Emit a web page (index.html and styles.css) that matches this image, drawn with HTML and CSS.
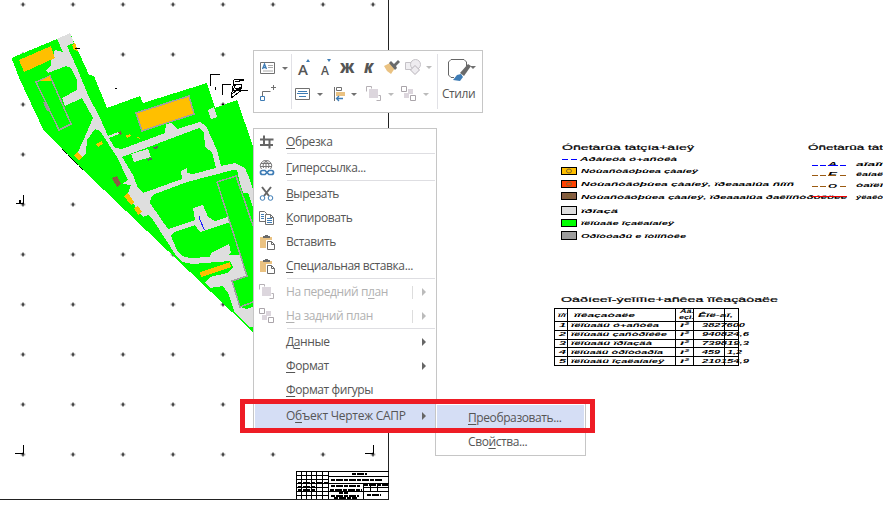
FILE: index.html
```
<!DOCTYPE html>
<html lang="ru">
<head>
<meta charset="utf-8">
<title>Чертеж САПР</title>
<link rel="stylesheet" href="styles.css">
</head>
<body>
<main class="canvas">
<svg class="drawing" viewBox="0 0 883 507" width="883" height="507">
  <defs>
    <pattern id="ticks" x="20.5" y="1.5" width="50" height="50" patternUnits="userSpaceOnUse"><path d="M1 3h4M3 1v4" stroke="#000" transform="translate(-.5 0)"/></pattern>
  </defs>
  <rect width="386" height="462" fill="url(#ticks)" shape-rendering="crispEdges"/>
  <path d="M388.5 0V499M0 499.5H389" stroke="#222" fill="none" shape-rendering="crispEdges"/>
  <g shape-rendering="crispEdges">
    <path d="M11.500 58L57 39 70 33 89 75 94 76 107 108 140 96 143 103 207 83 215 108 237 100 253 146V332L83 170 43 129 20 80Z" fill="#0f0"/>
    <path d="M57 39L70 33 74 43 67 46 77 68 88 95 100 118 108 136 118 132 119 134 109 138 115 148 122 149 165 133 166 124 172 123 177 129 200 122 206 126 217 150 221 166 235 163 245 168 250 180 253 190V327H249L235 313 228 293 223 286 210 288 205 282 210 277 227 273 233 267 230 261 193 264 182 262 177 257 153 220 148 215 143 217 133 203 128 193 131 185 122 184 128 180 117 157 100 131 95 129 87 140 86 153 82 157 78 152 87 132 93 118 82 98 65 106 62 98 77 90 77 80 71 68 66 66 48 73 46 70 51 66 51 60 55 50 63 52Z" fill="#dedede"/>
    <path d="M122 157L199 128 204 133 205 147 212 152 216 168 193 174 187 173 187 168 181 171 182 179 143 193 138 188 133 175Z" fill="#0f0"/>
    <path d="M150 203L151 197 155 194 187 182 233 170 237 170 240 183 243 193 248 193 253 207V307L246 309 240 307 232 281 248 276 240 255H228L231 253 229 244 211 253 210 257 190 258 182 256 177 250 171 236 174 232 195 225 200 232 230 222 228 217 215 221 208 217 203 205 193 208 195 220 168 229Z" fill="#0f0"/>
    <path d="M131 154L148 149 151 157 134 162ZM208 110L214 107 217 117 211 119Z" fill="#dedede"/>
    <path d="M36 82L50 76 71 124 59 130ZM217 182L236 176 258 240M217 182L247 276 232 281 240 307 253 302" stroke="#a0a0a0" stroke-width="1.500" fill="none"/>
    <path d="M136 113L189 96 194 114 142 131Z" fill="#ffbf00" stroke="#a0a0a0" stroke-width="1.500"/>
    <path d="M19 60L51 46 55 58 24 72ZM40 81L50 76 51 81ZM72 45L75 43 78 51 74 50ZM74 156L77 152 82 157 79 161ZM96 144L102 141 103 144 98 147ZM125 136L130 134 131 136 127 138ZM138 136L140 139 137 138ZM124 196L128 193 134 202 131 205ZM134 208L138 206 142 212 138 215ZM200 272L230 262 231 267 201 277Z" fill="#ffbf00"/>
    <path d="M112 178L117 176 121 184 117 187ZM118 132l3-1 1 3-2 1z" fill="#865d43"/>
    <path d="M152 148l5-2 2 1-3 2zM147 159l4-1 2 1-5 2z" fill="#606060"/>
    <path d="M199.500 216v3l5 11" stroke="#2020ff" fill="none"/>
    <path d="M62 149L83 170" stroke="#000" stroke-dasharray="7 1" fill="none"/>
    <path d="M44 102l4 9" stroke="#999" stroke-width="2"/>
    <path d="M75 48.500h5M210.500 86V74M210 74.500H220M222.500 95V84M222 84.500H231M16 203.500H24M23.500 195V204M20 203v-3M15 453.500H24M23.500 445V454M365 453.500H374M373.500 445V454M115 88.500h2M222 104.500h2M215.500 87v3" stroke="#000" fill="none" stroke-width="1.400"/>
    <path d="M231 98L234 80 244 79M235 82l9-2M234 84h7v4h-6zM233 91l15-1M232 94l10-8M231 98l11-8M236 89l9 2M232 92l4-8" stroke="#000" fill="none"/>
  </g>
  <g stroke="#000" fill="none" shape-rendering="crispEdges">
    <path d="M296.500 499V471.500H389M296.500 475.500H328M328 476.500H389M296.500 479.500H328M296.500 483.500H389M296.500 487.500H328M363 487.500H389M296.500 491.500H389M296.500 495.500H328M301.500 471V499M306.500 471V499M311.500 471V499M316.500 471V499M322.500 471V499M328.500 471V499M363.500 484V499M370.500 484V491M377.500 484V491"/>
    <path d="M352 473.500H367M331 479.500H382M298 482.500H328M298 486.500H315M298 489.500H315M331 485.500H360M330 489.500H362M339 492.500H348M331 495.500H359M334 497.500H357M364 484.500H388M367 494.500H381" stroke-width="2" stroke-dasharray="4 1 7 1"/>
  </g>
  <g class="cad">
    <text class="heading" x="562" y="150" textLength="132" lengthAdjust="spacingAndGlyphs">Óñetàrûà tàtçía+àíeÿ</text>
    <text class="heading" x="808" y="150" textLength="75" lengthAdjust="spacingAndGlyphs">Óñetàrûà tàt</text>
    <text x="580" y="160.500" textLength="97" lengthAdjust="spacingAndGlyphs">Aðàíeöà ó+añòêà</text>
    <text x="581" y="173" textLength="117" lengthAdjust="spacingAndGlyphs">Nóùañòâóþùea çàaíeÿ</text>
    <text x="581" y="186" textLength="213" lengthAdjust="spacingAndGlyphs">Nóùañòâóþùea çàaíeÿ, ïðeaaaìûa ñíïñ</text>
    <text x="581" y="199" textLength="266" lengthAdjust="spacingAndGlyphs">Nóùañòâóþùea çàaíeÿ, ïðeaaaìûa ðaêîíñòðóêöee</text>
    <text x="581" y="212.500" textLength="37" lengthAdjust="spacingAndGlyphs">ïðîaçä</text>
    <text x="581" y="225" textLength="93" lengthAdjust="spacingAndGlyphs">ïëîùaäe îçaëaíaíeÿ</text>
    <text x="581" y="238" textLength="105" lengthAdjust="spacingAndGlyphs">Oðîòóaðû e îòìîñòêe</text>
    <text x="856" y="165.500" textLength="27" lengthAdjust="spacingAndGlyphs">aîaîï</text>
    <text x="856" y="176" textLength="27" lengthAdjust="spacingAndGlyphs">êaíaë</text>
    <text x="856" y="187" textLength="27" lengthAdjust="spacingAndGlyphs">òaïëî</text>
    <text x="856" y="199" textLength="27" lengthAdjust="spacingAndGlyphs">ýëaêò</text>
    <text x="828" y="165.500" textLength="9" lengthAdjust="spacingAndGlyphs">A</text>
    <text x="828" y="176" textLength="9" lengthAdjust="spacingAndGlyphs">E</text>
    <text x="828" y="188" textLength="9" lengthAdjust="spacingAndGlyphs">O</text>
    <text class="heading" x="561" y="302" textLength="217" lengthAdjust="spacingAndGlyphs">Oàðíeeî-ýeîíîìe+añêea ïîêaçàòaëe</text>
    <text x="558" y="317" textLength="8" lengthAdjust="spacingAndGlyphs">ï/ï</text>
    <text x="574" y="317" textLength="61" lengthAdjust="spacingAndGlyphs">ïîêaçaòaëe</text>
    <text x="680" y="313" textLength="14" lengthAdjust="spacingAndGlyphs">Aä.</text>
    <text x="679" y="319" textLength="15" lengthAdjust="spacingAndGlyphs">eçì.</text>
    <text x="698" y="317" textLength="35" lengthAdjust="spacingAndGlyphs">Êîë-aî,</text>
    <text x="559" y="327" textLength="7" lengthAdjust="spacingAndGlyphs">1</text><text x="559" y="336" textLength="7" lengthAdjust="spacingAndGlyphs">2</text><text x="559" y="345" textLength="7" lengthAdjust="spacingAndGlyphs">3</text><text x="559" y="354" textLength="7" lengthAdjust="spacingAndGlyphs">4</text><text x="559" y="362.500" textLength="7" lengthAdjust="spacingAndGlyphs">5</text>
    <text x="571" y="327" textLength="88" lengthAdjust="spacingAndGlyphs">ïëîùaäü ó+añòêa</text><text x="571" y="336" textLength="96" lengthAdjust="spacingAndGlyphs">ïëîùaäü çañòðîéêe</text><text x="571" y="345" textLength="81" lengthAdjust="spacingAndGlyphs">ïëîùaäü ïðîaçäà</text><text x="571" y="354" textLength="92" lengthAdjust="spacingAndGlyphs">ïëîùaäü òðîòóaðîa</text><text x="571" y="362.500" textLength="93" lengthAdjust="spacingAndGlyphs">ïëîùaäü îçaëaíaíeÿ</text>
    <text x="680" y="327" textLength="9" lengthAdjust="spacingAndGlyphs">ì²</text><text x="680" y="336" textLength="9" lengthAdjust="spacingAndGlyphs">ì²</text><text x="680" y="345" textLength="9" lengthAdjust="spacingAndGlyphs">ì²</text><text x="680" y="354" textLength="9" lengthAdjust="spacingAndGlyphs">ì²</text><text x="680" y="362.500" textLength="9" lengthAdjust="spacingAndGlyphs">ì²</text>
    <text x="702" y="327" textLength="43" lengthAdjust="spacingAndGlyphs">3827600</text><text x="702" y="336" textLength="47" lengthAdjust="spacingAndGlyphs">940824,6</text><text x="702" y="345" textLength="47" lengthAdjust="spacingAndGlyphs">739819,3</text><text x="702" y="354" textLength="18" lengthAdjust="spacingAndGlyphs">459</text><text x="727" y="354" textLength="15" lengthAdjust="spacingAndGlyphs">1,2</text><text x="702" y="362.500" textLength="47" lengthAdjust="spacingAndGlyphs">210154,9</text>
  </g>
  <g shape-rendering="crispEdges" stroke="#000">
    <path d="M562 159.500h6M571 159.500h6" stroke="#00f"/>
    <rect x="561.500" y="167.500" width="15" height="7" fill="#ffbf00"/>
    <rect x="561.500" y="180.500" width="15" height="7" fill="#ff4000"/>
    <rect x="561.500" y="192.500" width="15" height="7" fill="#865d43"/>
    <rect x="561.500" y="206.500" width="15" height="8" fill="#dedede"/>
    <rect x="561.500" y="219.500" width="15" height="7" fill="#0f0"/>
    <rect x="561.500" y="231.500" width="15" height="8" fill="#9c9c9c"/>
    <path d="M554.500 308.500H738.500V365.500H554.500ZM554 321.500H739M554 330.500H739M554 339.500H739M554 347.500H739M554 356.500H739M567.500 308V366M675.500 308V366M693.500 308V366M724.500 308V366" fill="none"/>
    <path d="M812 165.500h6M820 165.500h6M828 165.500h10M840 165.500h6" stroke="#0000ff"/>
    <path d="M812 175.500h6M820 175.500h6M828 175.500h8M840 175.500h6M812 186.500h6M820 186.500h6M840 186.500h6" stroke="#9b5a10"/>
    <path d="M812 196.500H847" stroke="#f00000"/>
  </g>
  <g fill="none" stroke="#7d652d" stroke-width="1"><ellipse cx="569" cy="171" rx="2.500" ry="2"/><ellipse cx="569" cy="184" rx="2.500" ry="2"/><ellipse cx="569" cy="196" rx="2.500" ry="2"/></g>
</svg>

<svg class="symbols" aria-hidden="true">
  <symbol id="paste" viewBox="0 0 16 16"><path d="M1 3h12v3H7v8H1z" fill="#eac282"/><path d="M4 4V2h2V1h3v1h2v2z" fill="#6a6a6a"/><path d="M8.500 7.500h4l3 3v5h-7zM12.500 7.500v3h3" fill="#fff" stroke="#6a6a6a"/></symbol>
  <symbol id="front" viewBox="0 0 16 16"><path d="M3 3h9v9H3z" fill="#dcd6dd"/><path d="M.5 5.500v-5h5v2M10.500 14.500h4v-5h-2" fill="none" stroke="#b5b0b5"/></symbol>
  <symbol id="back" viewBox="0 0 16 16"><path d="M7 3h5v5H7zM3 7h5v5H3z" fill="#dcd6dd"/><path d="M.5.500h5v5h-5zM9.500 9.500h5v5h-5z" fill="#fff" stroke="#aaa5aa"/></symbol>
</svg>

<section class="toolbar">
  <div class="tools tools-shape">
    <svg class="icon" viewBox="0 0 16 16"><path d="M.5 2.500h14v11H.500z" fill="#fff" stroke="#707070"/><path d="M2.500 9l2-5 2 5M3 7.500h3" fill="none" stroke="#3e7cb5" stroke-width="1.300"/><path d="M8 5.500h5M8 7.500h5M3 11h10" stroke="#aaa"/></svg><i class="arrow"></i>
    <svg class="icon connector" viewBox="0 0 17 17"><path d="M2.500 11V6.500h8M13.500 0v5M11 2.500h5" fill="none" stroke="#707070"/><path d="M.5 11.500h4v4h-4z" fill="#fff" stroke="#3e7cb5"/></svg>
  </div>
  <div class="tools tools-format">
    <div class="row"><span class="glyph big">A<i class="up"></i></span><span class="glyph small">A<i class="down"></i></span><b class="glyph bold">Ж</b><b class="glyph italic">К</b>
      <svg class="icon" viewBox="0 0 16 16"><path d="M0 7l6-3 5 5-4 6-4-3z" fill="#eac282"/><path d="M5 4l2-2 3 3 4-4 2 2-4 4 1 2-2 2z" fill="#6a6a6a"/></svg>
      <svg class="icon shapes" viewBox="0 0 16 16"><path d="M.5 3.500h7v7h-7z" fill="#f0eff2" stroke="#c5c2c7"/><circle cx="10.500" cy="5.500" r="5" fill="#eeecf0" stroke="#c5c2c7"/><path d="M10 6.500l4.500 4.500-4.500 4.500L5.500 11z" fill="#eeecf0" stroke="#b7b2b9"/></svg><i class="arrow pale"></i></div>
    <div class="row second">
      <svg class="icon" viewBox="0 0 16 16"><path d="M.5 2.500h14v11H.500z" fill="#fff" stroke="#707070"/><path d="M3 5.500h9M2 7.500h11M4 10.500h7" stroke="#3e7cb5"/></svg><i class="arrow"></i>
      <svg class="icon align" viewBox="0 0 12 16"><path d="M.5 1v14" stroke="#707070"/><path d="M2.500 1.500h5v3h-5z" fill="none" stroke="#707070"/><path d="M2 6h9v4H2z" fill="#eac282"/><path d="M9 12.500H3M5 10l-2.500 2.500L5 15" fill="none" stroke="#3e7cb5" stroke-width="1.300"/></svg><i class="arrow"></i>
      <svg class="icon to-front"><use href="#front"/></svg><i class="arrow pale"></i>
      <svg class="icon to-back"><use href="#back"/></svg><i class="arrow pale"></i></div>
  </div>
  <div class="styles"><div class="style-top"><svg width="23" height="23" viewBox="0 0 23 23"><path d="M6 18.500H3L.5 16V3L3 .5h13L18.500 3v4" fill="none" stroke="#666"/><path d="M12 14l8-9 3 2-7 10z" fill="#6a6a6a"/><path d="M5 21l4-5 4-1 2 3-3 4z" fill="#3e7cb5"/></svg><i class="arrow"></i></div><span>Стили</span></div>
</section>

<nav class="menu">
  <div class="item crop"><svg class="icon" viewBox="0 0 16 16"><path d="M5 1.500v9.500h9M1 5.500h9.500v9M1 11h4M10.500 5.500h4" fill="none" stroke="#666" stroke-width="2"/></svg><span><u>О</u>брезка</span></div><hr class="wide">
  <div class="item"><svg class="icon" viewBox="0 0 16 16"><path d="M2.500 9a5.500 5.500 0 1 1 9 0M1 6.500h12M2 3.500h10M7 .5v8M4.500 8c-1-3 0-6 2.500-7 2.500 1 3.500 4 2.500 7" fill="none" stroke="#777"/><path d="M8 12.500L6 10.500H3.500a2 2 0 0 0 0 4H6l4-4h2.500a2 2 0 0 1 0 4H10z" fill="#fff" stroke="#3e7cb5" stroke-width="1.700"/></svg><span><u>Г</u>иперссылка...</span></div><hr>
  <div class="item"><svg class="icon" viewBox="0 0 16 16"><path d="M3 1l7 9M12 1L5 10" stroke="#666" stroke-width="2"/><circle cx="3.500" cy="12" r="2.300" fill="#fff" stroke="#3e7cb5"/><circle cx="11.500" cy="12" r="2.300" fill="#fff" stroke="#3e7cb5"/></svg><span><u>В</u>ырезать</span></div>
  <div class="item"><svg class="icon" viewBox="0 0 16 16"><path d="M.5 1.500h5l2 2v8h-7z" fill="#fff" stroke="#707070"/><path d="M2 4.500h3M2 6.500h3M2 8.500h3" stroke="#3e7cb5"/><path d="M6.500 4.500h5l3 3v7h-8zM11.500 4.500v3h3" fill="#fff" stroke="#707070"/><path d="M8 8.500h5M8 10.500h5M8 12.500h5" stroke="#3e7cb5"/></svg><span><u>К</u>опировать</span></div>
  <div class="item"><svg class="icon"><use href="#paste"/></svg><span>Вставить</span></div>
  <div class="item"><svg class="icon"><use href="#paste"/></svg><span><u>С</u>пециальная вставка...</span></div><hr>
  <div class="item disabled"><svg class="icon"><use href="#front"/></svg><span>На передний п<u>л</u>ан</span><i class="split"></i><i class="next"></i></div>
  <div class="item disabled"><svg class="icon"><use href="#back"/></svg><span><u>Н</u>а задний план</span><i class="split"></i><i class="next"></i></div><hr>
  <div class="item"><span class="icon"></span><span>Д<u>а</u>нные</span><i class="next"></i></div>
  <div class="item"><span class="icon"></span><span><u>Ф</u>ормат</span><i class="next"></i></div>
  <div class="item"><span class="icon"></span><span><u>Ф</u>ормат фигуры</span></div>
  <div class="item selected"><span class="icon"></span><span class="object">О<u>б</u>ъект Чертеж САПР</span><i class="next"></i></div>
</nav>
<nav class="submenu"><div class="subitem selected"><span><u>П</u>реобразовать...</span></div><div class="subitem"><span>Сво<u>й</u>ства...</span></div></nav>
<div class="callout"></div>
</main>
</body>
</html>
```
FILE: styles.css
```
* { box-sizing: border-box; }
body { margin: 0; overflow: hidden; background: #fff; color: #555; font: 12px/16px "Open Sans", "Noto Sans", sans-serif; }
.canvas { position: relative; width: 883px; height: 507px; overflow: hidden; }
.drawing { display: block; }
.symbols { position: absolute; width: 0; height: 0; }
.cad { font: italic bold 6px "Liberation Sans", sans-serif; fill: #000; }
.cad .heading { font: 8px "Liberation Sans", sans-serif; stroke: #000; stroke-width: .2px; }
u { text-decoration: underline; text-decoration-thickness: 1px; text-underline-offset: 2px; }
.icon { width: 16px; height: 16px; flex: none; }
.toolbar, .menu, .submenu { position: absolute; background: #fff; border: 1px solid #c6c6c6; }
.menu, .submenu { letter-spacing: -.4px; }
.toolbar { left: 253px; top: 50px; width: 230px; height: 63px; display: flex; padding: 3px 0; }
.tools-shape { width: 38px; padding: 6px 0 0 6px; display: flex; flex-wrap: wrap; align-content: flex-start; border-right: 1px solid #e1e1e6; }
.connector { margin-top: 9px; width: 17px; height: 17px; }
.arrow { width: 0; height: 0; flex: none; border: 3px solid transparent; border-top-color: #707070; border-bottom: 0; margin: 7px 0 0 6px; }
.pale { border-top-color: #bbb; }
.tools-format { width: 146px; border-right: 1px solid #e1e1e6; padding-top: 5px; }
.row { display: flex; height: 27px; padding-left: 6px; }
.glyph { position: relative; font-size: 14px; line-height: 17px; width: 20px; height: 18px; flex: none; }
.big { width: 23px; font-size: 15px; font-weight: 600; padding-top: 2px; }
.small { width: 19px; font-size: 12px; font-weight: 600; padding-top: 3px; }
.bold { width: 20px; }
.italic { font-style: italic; padding-left: 4px; width: 24px; }
.glyph i { position: absolute; top: 0; left: 8px; border: 2.5px solid transparent; }
.glyph .up { border-bottom: 3px solid #3e7cb5; border-top: 0; }
.glyph .down { border-top: 3px solid #3e7cb5; border-bottom: 0; left: 6px; }
b.glyph { font-weight: 800; }
.row .shapes { margin-left: 5px; }
.row .shapes + .arrow { margin-left: 5px; }
.second { padding-left: 3px; }
.second .align { width: 12px; margin-left: 11px; }
.second .align + .arrow { margin-left: 5px; }
.second .to-front { margin-left: 9px; }
.second .to-back { margin-left: 7px; }
.second .pale { margin-left: 6px; }
.styles { width: 43px; padding-top: 5px; }
.style-top { display: flex; padding-left: 10px; height: 27px; }
.style-top .arrow { margin-left: -1px; }
.styles span { display: block; padding-left: 4px; letter-spacing: -.45px; }
.menu { left: 253px; top: 128px; width: 184px; height: 302px; padding: 1px 1px; }
.item { display: flex; align-items: center; height: 24px; padding-left: 4px; position: relative; white-space: nowrap; }
.item > span:nth-child(2) { margin-left: 11px; }
.menu .object { letter-spacing: -.25px; }
.menu hr { margin: 0 0 0 32px; border: 0; border-top: 1px solid #dedee2; height: 2px; }
.menu .wide { height: 3px; }
.menu .crop { height: 23px; }
.next { margin-left: auto; margin-right: 9px; border: 4px solid transparent; border-left: 4px solid #666; border-right: 0; }
.split { width: 1px; height: 13px; background: #ddd; margin-left: auto; }
.split + .next { margin-left: 9px; }
.disabled { color: #b1b1b1; }
.disabled .next { border-left-color: #bbb; }
.selected { background: #d5def5; }
.menu .selected { height: 27px; }
.submenu { left: 435px; top: 403px; width: 151px; height: 53px; padding: 1px; }
.subitem { height: 25px; padding: 4px 0 0 31px; white-space: nowrap; }
.submenu .selected { height: 25px; padding-top: 5px; }
.callout { position: absolute; left: 240px; top: 399px; width: 355px; height: 34px; border: 5px solid #ee1c25; }
```
